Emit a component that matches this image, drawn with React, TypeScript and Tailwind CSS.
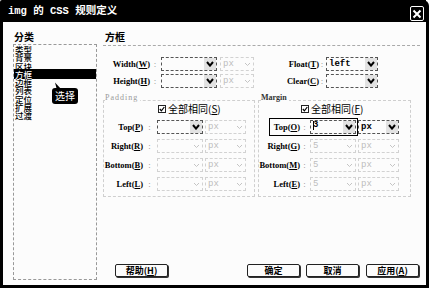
import React from "react";

function Chev({ disabled }: { disabled?: boolean }) {
  return disabled ? (
    <svg width="7" height="5" viewBox="0 0 7 5">
      <polyline points="1,1 3.5,3.5 6,1" fill="none" stroke="#c4c4c4" strokeWidth="1" />
    </svg>
  ) : (
    <svg width="8" height="6" viewBox="0 0 8 6">
      <polyline points="1,1 4,4.6 7,1" fill="none" stroke="#000" strokeWidth="2" />
    </svg>
  );
}

function Sel({
  className,
  value,
  disabled,
}: {
  className: string;
  value?: React.ReactNode;
  disabled?: boolean;
}) {
  return (
    <div
      className={`${className} h-[14px] flex items-center border border-dashed ${
        disabled ? "border-[#d2d2d2]" : "border-[#555]"
      }`}
    >
      <span
        className={`flex-1 pl-[2px] text-[9px] leading-none font-['Liberation_Mono',monospace] ${
          disabled ? "text-[#bdbdbd]" : "text-black font-bold"
        }`}
      >
        {value}
      </span>
      <span
        className={`w-[12px] h-full flex items-center justify-center ${
          disabled ? "" : "bg-[#e2e2e2]"
        }`}
      >
        <Chev disabled={disabled} />
      </span>
    </div>
  );
}

function Check() {
  return (
    <span className="w-[8px] h-[8px] border border-[#222] flex items-center justify-center bg-white">
      <svg width="6" height="6" viewBox="0 0 6 6">
        <polyline points="0.8,3 2.4,4.8 5.3,1" fill="none" stroke="#000" strokeWidth="1.2" />
      </svg>
    </span>
  );
}

const lbl = "font-['Liberation_Serif',serif] font-bold text-[8.5px] leading-none text-black";
const colon = "text-[#8a8a8a] text-[9px] leading-none text-center font-['Liberation_Serif',serif]";

function Btn({ className, children }: { className: string; children: React.ReactNode }) {
  return (
    <div
      className={`${className} w-[53px] h-[13px] flex items-center justify-center border border-[#222] rounded-[2px] shadow-[1px_1px_0_#333] text-[9px] font-bold leading-none bg-[#fcfcfc]`}
    >
      {children}
    </div>
  );
}

export default function App() {
  const items = ["类型", "背景", "区块", "方框", "边框", "列表", "定位", "扩展", "过渡"];
  return (
    <div className="w-[432px] h-[293px] bg-white overflow-hidden font-['Noto_Sans_CJK_SC',sans-serif]">
      <div className="w-[429px] h-[288px] flex flex-col bg-[#fcfcfc] border-x-[3px] border-b-[3px] border-black rounded-tr-[6px] rounded-tl-[2px]">
        {/* Title bar */}
        <div className="h-[22px] shrink-0 bg-black flex items-center pl-[5px] pr-[2px]">
          <span className="text-white font-bold text-[10.5px] leading-none whitespace-pre font-['Liberation_Mono','Noto_Sans_CJK_SC',monospace]">
            img 的 CSS 规则定义
          </span>
          <div className="ml-auto self-start mt-[6px] w-[14px] h-[15px] border border-white rounded-[2px] flex items-center justify-center">
            <svg width="10" height="10" viewBox="0 0 10 10">
              <path d="M1.5 1.5 L8.5 8.5 M8.5 1.5 L1.5 8.5" stroke="#fff" strokeWidth="2" />
            </svg>
          </div>
        </div>

        {/* Body */}
        <div className="flex flex-1 min-h-0">
          {/* Left column */}
          <div className="w-[94px] pl-[10px] flex flex-col">
            <div className="mt-[9px] h-[12px] leading-[12px] text-[10px] font-bold pl-[1px] text-black">
              分类
            </div>
            <div className="mt-[1px] h-[236px] border border-dashed border-[#999] relative">
              <div className="flex flex-col text-[8.5px] leading-[8.3px] text-black font-medium">
                {items.map((t) =>
                  t === "方框" ? (
                    <div key={t} className="h-[10.3px] -my-[1px] py-[1px] bg-black text-white pl-[1px]">
                      {t}
                    </div>
                  ) : (
                    <div key={t} className="h-[8.3px] pl-[1px]">
                      {t}
                    </div>
                  )
                )}
              </div>
              <svg className="absolute left-[40px] top-[37px]" width="9" height="8" viewBox="0 0 9 8">
                <polygon points="1,0.5 3,8 8,8" fill="#000" />
              </svg>
              <div className="absolute left-[38px] top-[43px] w-[26px] h-[16px] bg-black rounded-[3px] text-white text-[10px] leading-none flex items-center justify-center">
                选择
              </div>
            </div>
          </div>

          {/* Right column */}
          <div className="ml-[6px] w-[317px] flex flex-col">
            <div className="mt-[9px] h-[12px] leading-[12px] text-[10px] font-bold pl-[2px] text-black">
              方框
            </div>
            <div className="mt-[2px] border-t border-dashed border-[#aaa]" />

            {/* Row 1 */}
            <div className="mt-[11px] h-[14px] flex items-center">
              <div className={`w-[47px] text-right ${lbl}`}>
                Width(<u>W</u>)
              </div>
              <div className={`w-[10px] ${colon}`}>:</div>
              <Sel className="ml-[1px] w-[56px]" />
              <Sel className="ml-[3px] w-[34px]" value="px" disabled />
              <div className={`w-[65px] text-right ${lbl}`}>
                Float(<u>T</u>)
              </div>
              <div className={`w-[6px] ${colon}`}>:</div>
              <Sel className="ml-[1px] w-[52px]" value="left" />
            </div>

            {/* Row 2 */}
            <div className="mt-[3px] h-[14px] flex items-center">
              <div className={`w-[47px] text-right ${lbl}`}>
                Height(<u>H</u>)
              </div>
              <div className={`w-[10px] ${colon}`}>:</div>
              <Sel className="ml-[1px] w-[56px]" />
              <Sel className="ml-[3px] w-[34px]" value="px" disabled />
              <div className={`w-[65px] text-right ${lbl}`}>
                Clear(<u>C</u>)
              </div>
              <div className={`w-[6px] ${colon}`}>:</div>
              <Sel className="ml-[1px] w-[52px]" />
            </div>

            {/* Groups */}
            <div className="mt-[12px] flex gap-[3px]">
              {/* Padding */}
              <div className="w-[152px] h-[97px] border border-dashed border-[#cfcfcf] flex flex-col">
                <div className="-mt-[8px] ml-[1px] w-fit pr-[2px] bg-[#fcfcfc] h-[10px] leading-[10px] text-[8px] tracking-[1px] text-[#9a9a9a] font-['Liberation_Serif',serif]">
                  Padding
                </div>
                <div className="h-[12px] flex items-center pl-[54px]">
                  <Check />
                  <span className="ml-[2px] text-[10px] leading-none text-black">
                    全部相同(<u>S</u>)
                  </span>
                </div>
                <div className="mt-[5px] h-[14px] flex items-center">
                  <div className={`w-[39px] text-right ${lbl}`}>
                    Top(<u>P</u>)
                  </div>
                  <div className={`w-[13px] ${colon}`}>:</div>
                  <Sel className="ml-[1px] w-[46px]" />
                  <Sel className="ml-[2px] w-[41px]" value="px" disabled />
                </div>
                <div className="mt-[5px] h-[14px] flex items-center">
                  <div className={`w-[39px] text-right ${lbl}`}>
                    Right(<u>R</u>)
                  </div>
                  <div className={`w-[13px] ${colon}`}>:</div>
                  <Sel className="ml-[1px] w-[46px]" disabled />
                  <Sel className="ml-[2px] w-[41px]" value="px" disabled />
                </div>
                <div className="mt-[5px] h-[14px] flex items-center">
                  <div className={`w-[39px] text-right ${lbl}`}>
                    Bottom(<u>B</u>)
                  </div>
                  <div className={`w-[13px] ${colon}`}>:</div>
                  <Sel className="ml-[1px] w-[46px]" disabled />
                  <Sel className="ml-[2px] w-[41px]" value="px" disabled />
                </div>
                <div className="mt-[5px] h-[14px] flex items-center">
                  <div className={`w-[39px] text-right ${lbl}`}>
                    Left(<u>L</u>)
                  </div>
                  <div className={`w-[13px] ${colon}`}>:</div>
                  <Sel className="ml-[1px] w-[46px]" disabled />
                  <Sel className="ml-[2px] w-[41px]" value="px" disabled />
                </div>
              </div>

              {/* Margin */}
              <div className="w-[153px] h-[97px] border border-dashed border-[#cfcfcf] flex flex-col">
                <div className="-mt-[8px] ml-[2px] w-fit pr-[2px] bg-[#fcfcfc] h-[10px] leading-[10px] text-[8px] text-[#333] font-bold font-['Liberation_Serif',serif]">
                  Margin
                </div>
                <div className="h-[12px] flex items-center pl-[42px]">
                  <Check />
                  <span className="ml-[2px] text-[10px] leading-none text-black">
                    全部相同(<u>F</u>)
                  </span>
                </div>
                <div className="mt-[5px] h-[14px] flex items-center">
                  <div className="ml-[12px] flex items-center outline outline-black outline-offset-1">
                    <div className={`w-[29px] text-right ${lbl}`}>
                      Top(<u>O</u>)
                    </div>
                    <div className={`w-[9px] ${colon}`}>:</div>
                    <Sel
                      className="ml-[1px] w-[46px]"
                      value={
                        <span className="inline-flex items-center">
                          <span className="w-[1px] h-[9px] bg-black" />
                          <span className="-ml-[1px]">3</span>
                        </span>
                      }
                    />
                  </div>
                  <Sel className="ml-[2px] w-[41px]" value="px" />
                </div>
                <div className="mt-[5px] h-[14px] flex items-center">
                  <div className={`w-[41px] text-right ${lbl}`}>
                    Right(<u>G</u>)
                  </div>
                  <div className={`w-[9px] ${colon}`}>:</div>
                  <Sel className="ml-[1px] w-[46px]" value="5" disabled />
                  <Sel className="ml-[2px] w-[41px]" value="px" disabled />
                </div>
                <div className="mt-[5px] h-[14px] flex items-center">
                  <div className={`w-[41px] text-right ${lbl}`}>
                    Bottom(<u>M</u>)
                  </div>
                  <div className={`w-[9px] ${colon}`}>:</div>
                  <Sel className="ml-[1px] w-[46px]" value="5" disabled />
                  <Sel className="ml-[2px] w-[41px]" value="px" disabled />
                </div>
                <div className="mt-[5px] h-[14px] flex items-center">
                  <div className={`w-[41px] text-right ${lbl}`}>
                    Left(<u>E</u>)
                  </div>
                  <div className={`w-[9px] ${colon}`}>:</div>
                  <Sel className="ml-[1px] w-[46px]" value="5" disabled />
                  <Sel className="ml-[2px] w-[41px]" value="px" disabled />
                </div>
              </div>
            </div>

            {/* Buttons */}
            <div className="mt-auto mb-[8px] h-[13px] flex">
              <Btn className="ml-[12px]">
                帮助(<u>H</u>)
              </Btn>
              <Btn className="ml-[79px]">确定</Btn>
              <Btn className="ml-[6px]">取消</Btn>
              <Btn className="ml-[7px]">
                应用(<u>A</u>)
              </Btn>
            </div>
          </div>
        </div>
      </div>
    </div>
  );
}
